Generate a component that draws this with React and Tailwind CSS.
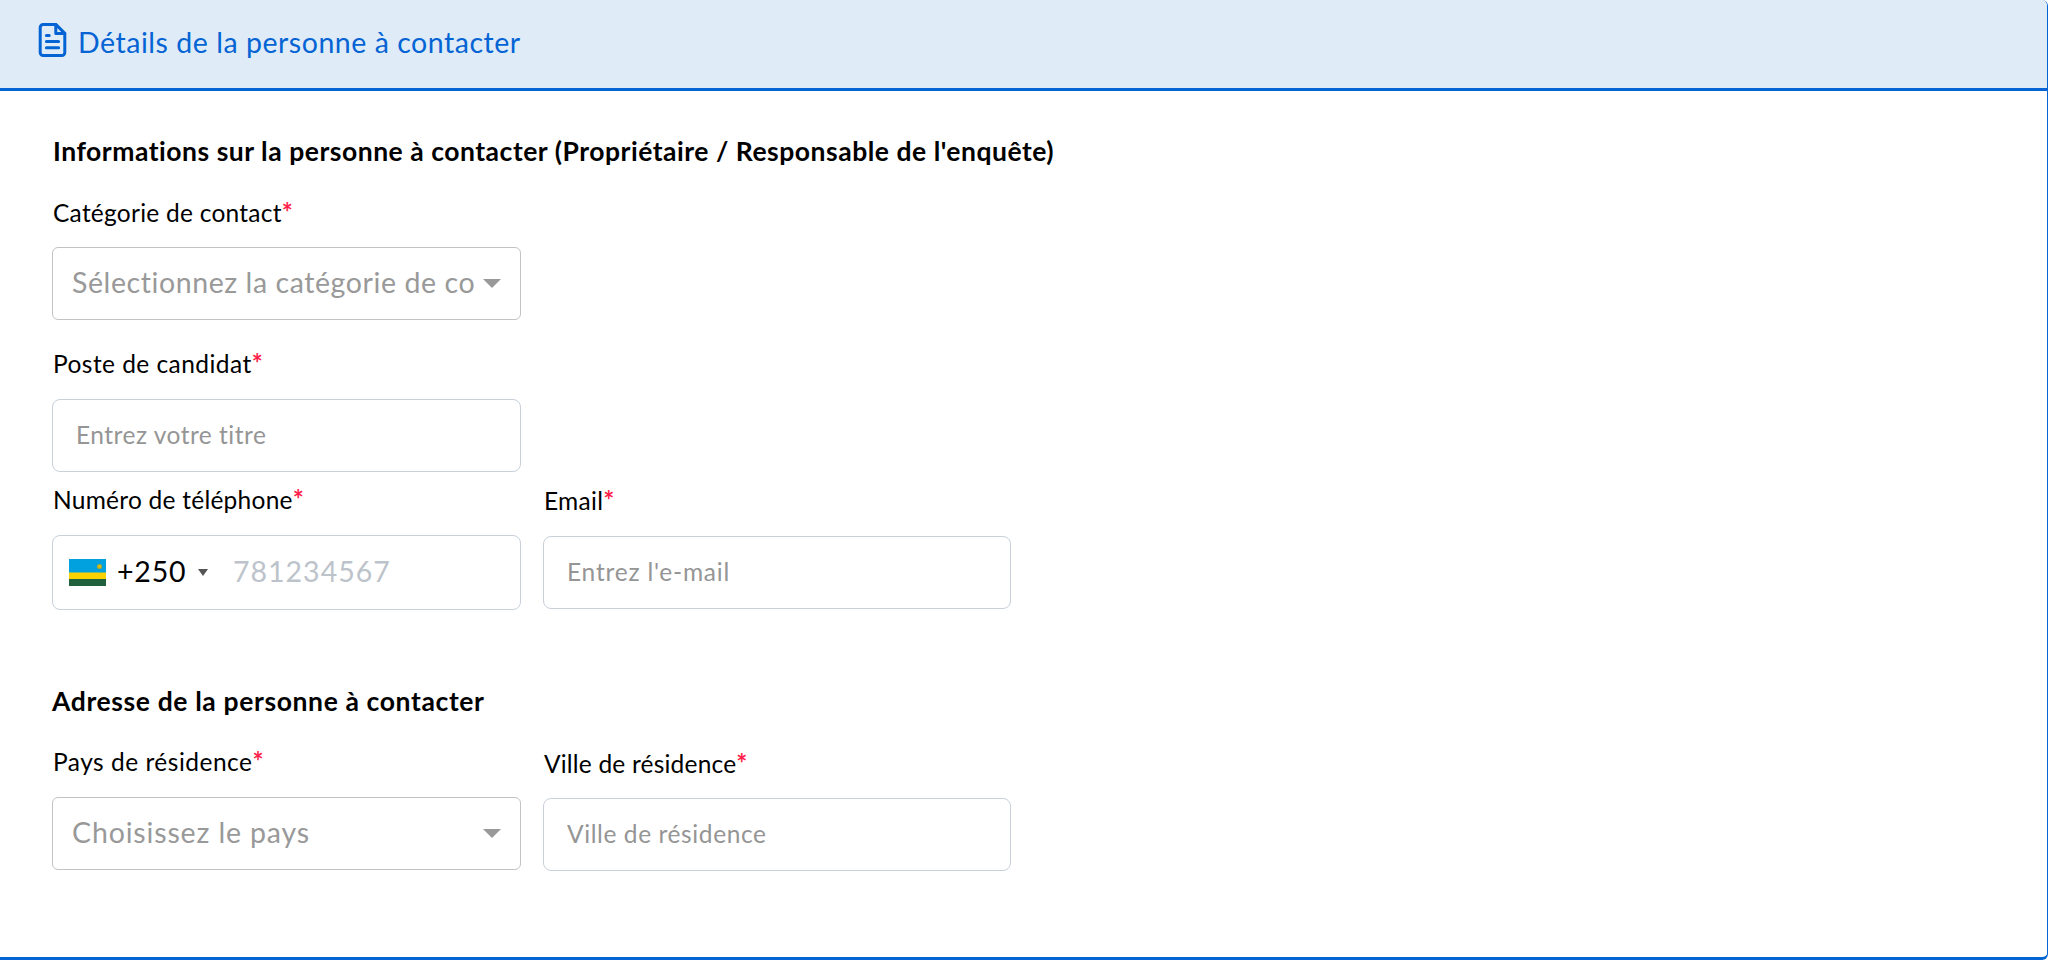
import React from 'react';

// Document icon shown in the header
const DocumentIcon = () => (
  <svg
    xmlns="http://www.w3.org/2000/svg"
    className="h-[36px] w-[30px] shrink-0"
    fill="none"
    viewBox="0 0 30 36"
    stroke="currentColor"
    strokeWidth={3}
    strokeLinecap="round"
    strokeLinejoin="round"
  >
    <path d="M17.8 2.4H5.2a3 3 0 0 0-3 3v25.2a3 3 0 0 0 3 3h18.6a3 3 0 0 0 3-3V11.4L17.8 2.4z" />
    <path d="M17.8 2.4v9h9" />
    <path d="M8.4 13.4h2.8M8.4 19.6h12.2M8.4 25.8h12.2" />
  </svg>
);

const RwandaFlag = () => (
  <svg className="h-[27px] w-[37px] shrink-0" viewBox="0 0 37 27">
    <rect width="37" height="27" fill="#00a1de" />
    <rect y="13.5" width="37" height="7" fill="#fad201" />
    <rect y="20" width="37" height="7" fill="#20603d" />
    <circle cx="30.5" cy="7.5" r="2.6" fill="#a3a93a" />
    <circle cx="30.5" cy="7.5" r="1.4" fill="#e5be01" />
  </svg>
);

const Label = ({ children, className = 'tracking-[0.3px]' }) => (
  <label className={`block h-8 pl-px text-[24.5px] leading-8 whitespace-nowrap text-black ${className}`}>
    {children}
    <span className="text-[26px] leading-none font-bold text-[#ff1f4b]">*</span>
  </label>
);

const Select = ({ children, className }) => (
  <div className="flex h-[73px] w-full items-center justify-between rounded-[6px] border border-[#c3c3c3] pl-[19px] pr-[19px] text-[28.5px] text-[#999999]">
    <span className={`pb-[2px] whitespace-nowrap ${className}`}>{children}</span>
    <svg className="h-[9px] w-[18px] shrink-0" viewBox="0 0 18 9">
      <path d="M0 0h18L9 9z" fill="#999999" />
    </svg>
  </div>
);

const Input = ({ placeholder, className }) => (
  <input
    type="text"
    placeholder={placeholder}
    className={`block h-[73px] w-full rounded-[8px] border border-[#c8d0da] px-[23px] pb-[2px] text-[24.5px] text-black placeholder:text-[#959595] ${className}`}
  />
);

function App() {
  return (
    <section className="flex h-[960px] w-full flex-col overflow-hidden rounded-r-[6px] border-r border-b-[3px] border-[#0464d4] bg-white font-['Lato',sans-serif]">
      <header className="flex h-[91px] shrink-0 items-start border-b-[3px] border-[#0464d4] bg-[#dfebf7] pt-[22px] pl-[38px] text-[#0464d4]">
        <DocumentIcon />
        <h1 className="ml-[10px] text-[28.5px] leading-[40px] tracking-[0.53px] whitespace-nowrap">
          Détails de la personne à contacter
        </h1>
      </header>

      <form className="flex flex-col pt-[44px] pl-[52px]">
        <h2 className="h-8 pl-px text-[26.5px] leading-8 font-bold tracking-[0.52px] whitespace-nowrap text-black">
          Informations sur la personne à contacter (Propriétaire / Responsable de l'enquête)
        </h2>

        <div className="mt-[30px] flex w-[469px] flex-col">
          <Label className="tracking-[0.25px]">Catégorie de contact</Label>
          <div className="mt-[18px]">
            <Select className="tracking-[0.58px]">Sélectionnez la catégorie de co</Select>
          </div>
          <Label className="mt-[28px] tracking-[0.45px]">Poste de candidat</Label>
          <div className="mt-[19px]">
            <Input placeholder="Entrez votre titre" className="tracking-[0.5px]" />
          </div>
        </div>

        <div className="mt-[12px] flex gap-[22px]">
          <div className="w-[469px]">
            <Label className="tracking-[0.25px]">Numéro de téléphone</Label>
            <div className="mt-[19px] flex h-[75px] items-center rounded-[8px] border border-[#c8d0da] pl-[16px] text-[28.5px]">
              <RwandaFlag />
              <span className="ml-[11px] w-[70px] pb-[2px] tracking-[0.8px] text-black">+250</span>
              <svg className="ml-[11px] h-[7px] w-[10px] shrink-0" viewBox="0 0 10 7">
                <path d="M0 0h10L5 7z" fill="#555555" />
              </svg>
              <input
                type="tel"
                placeholder="781234567"
                className="ml-[25px] w-[240px] pb-[2px] tracking-[1px] placeholder:text-[#bcc3ca]"
              />
            </div>
          </div>
          <div className="w-[468px] pt-px">
            <Label className="tracking-[0.3px]">Email</Label>
            <div className="mt-[19px]">
              <Input placeholder="Entrez l'e-mail" className="tracking-[0.8px]" />
            </div>
          </div>
        </div>

        <h2 className="mt-[75px] h-8 text-[26.5px] leading-8 font-bold tracking-[0.62px] whitespace-nowrap text-black">
          Adresse de la personne à contacter
        </h2>

        <div className="mt-[29px] flex gap-[22px]">
          <div className="w-[469px]">
            <Label className="tracking-[0.5px]">Pays de résidence</Label>
            <div className="mt-[19px]">
              <Select className="tracking-[0.85px]">Choisissez le pays</Select>
            </div>
          </div>
          <div className="w-[468px] pt-[2px]">
            <Label className="tracking-[0.2px]">Ville de résidence</Label>
            <div className="mt-[18px]">
              <Input placeholder="Ville de résidence" className="tracking-[0.6px]" />
            </div>
          </div>
        </div>
      </form>
    </section>
  );
}

export default App;
